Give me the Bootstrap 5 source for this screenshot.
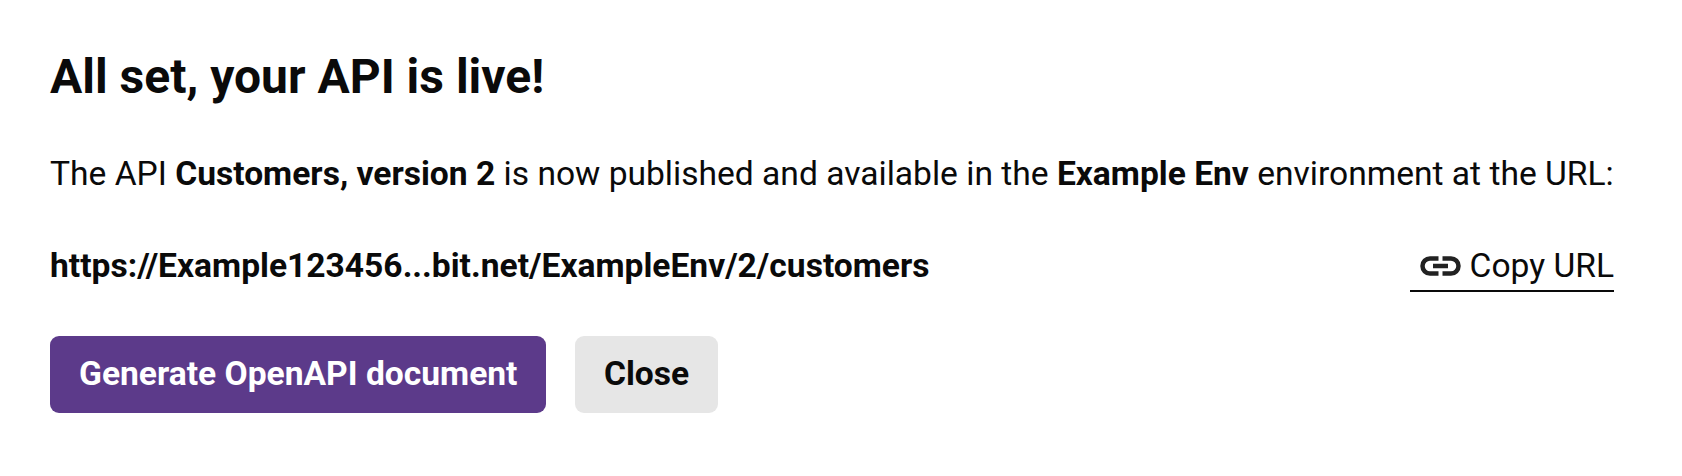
<!DOCTYPE html>
<html lang="en"><head><meta charset="utf-8">
<link href="https://cdn.jsdelivr.net/npm/bootstrap@5.3.0/dist/css/bootstrap.min.css" rel="stylesheet">
<style>
html,body{height:476px;overflow:hidden;background:#fff}
body{font-family:Roboto,"Liberation Sans",sans-serif;color:#0a0a0a;}
.wrap-pane{padding:46px 68px 0 50px;width:1682px}
.ttl{font-size:48px;font-weight:700;line-height:62px;margin:0 0 44px;color:#0a0a0a}
.intro{font-size:33.6px;line-height:44px;margin:0 0 48px;font-weight:400;white-space:nowrap}
.intro b,.urltxt{font-weight:700}
.urltxt{font-size:33.6px;line-height:44px}
.copy{font-size:33.6px;line-height:44px;color:#0a0a0a;text-decoration:none;border-bottom:2px solid #0a0a0a;padding:0 0 2px 10px;gap:9px}
.gen-btn,.close-btn{font-size:33.6px;font-weight:700;height:77px;padding:0 29px;border-radius:9px;border:0;}
.gen-btn{background:#5c3a8a;color:#fff}
.close-btn{background:#e6e6e6;color:#0a0a0a;padding:0 28.500px}
.acts{margin-top:44px;gap:29px}
</style></head><body>
<div class="wrap-pane">
<h1 class="ttl">All set, your API is live!</h1>
<p class="intro">The API <b>Customers, version 2</b> is now published and available in the <b>Example Env</b> environment at the URL:</p>
<div class="d-flex justify-content-between align-items-start">
<span class="urltxt">https://Example123456...bit.net/ExampleEnv/2/customers</span>
<a href="#" class="copy d-inline-flex align-items-center">
<svg width="41" height="20" viewBox="0 0 41 20" fill="none" stroke="#222" stroke-width="4.500"><path d="M18.500 2.500H10a7.500 7.500 0 0 0 0 15h8.500M22.500 2.500H31a7.500 7.500 0 0 1 0 15h-8.500M13 10h15"/></svg>Copy URL</a>
</div>
<div class="acts d-flex">
<button type="button" class="btn gen-btn">Generate OpenAPI document</button>
<button type="button" class="btn close-btn">Close</button>
</div>
</div>
</body></html>
